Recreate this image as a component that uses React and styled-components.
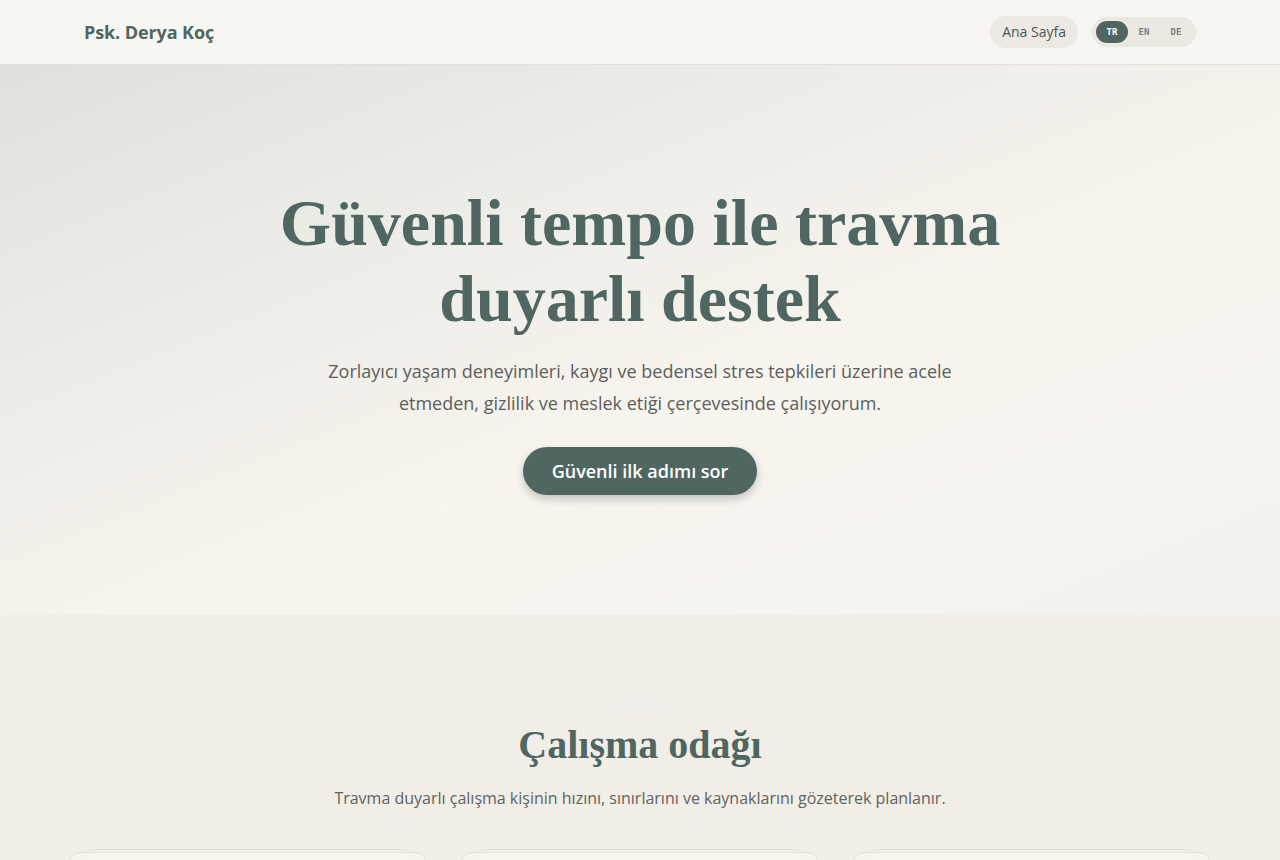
import React from "react";
import styled, { createGlobalStyle } from "styled-components";

const Global = createGlobalStyle`
  * { box-sizing: border-box; }
  html, body { margin: 0; padding: 0; }
  body {
    font-family: "Open Sans", "Noto Sans", sans-serif;
    background: #f1ede7;
    color: #4f6661;
  }
`;

const Header = styled.header`
  height: 65px;
  background: #f7f6f2;
  border-bottom: 1px solid #e2e0d9;
  display: flex;
  align-items: center;
  justify-content: space-between;
  padding: 0 84px 1px;
`;

const Logo = styled.div`
  font-size: 18px;
  font-weight: 700;
  color: #4f6661;
  letter-spacing: -0.1px;
`;

const Nav = styled.nav`
  display: flex;
  align-items: center;
  gap: 14px;
`;

const NavLink = styled.a`
  display: inline-flex;
  align-items: center;
  height: 32px;
  padding: 0 12px;
  border-radius: 16px;
  background: #ece9e3;
  color: #4a5856;
  font-size: 14px;
  text-decoration: none;
`;

const LangToggle = styled.div`
  display: flex;
  align-items: center;
  height: 30px;
  padding: 0 4px;
  border-radius: 15px;
  background: #ebe8e1;
`;

const LangButton = styled.button`
  border: none;
  height: 22px;
  width: 32px;
  border-radius: 11px;
  font-family: "DejaVu Sans Mono", "Liberation Mono", monospace;
  font-size: 9px;
  font-weight: 700;
  cursor: pointer;
  background: ${(p) => (p.$active ? "#4f6661" : "transparent")};
  color: ${(p) => (p.$active ? "#ffffff" : "#7d817f")};
  padding: 0;
`;

const Hero = styled.section`
  height: 550px;
  display: flex;
  flex-direction: column;
  align-items: center;
  justify-content: center;
  text-align: center;
  background: linear-gradient(158deg, #dfe1dc 0%, #ecece6 28%, #f8f4ee 58%, #f6f4ef 78%, #f2f3ee 100%);
`;

const Title = styled.h1`
  margin: 0;
  font-family: "Liberation Serif", "DejaVu Serif", serif;
  font-weight: 700;
  font-size: 66px;
  line-height: 76px;
  color: #4f6661;
  max-width: 760px;
`;

const Lead = styled.p`
  margin: 18px 0 0;
  max-width: 640px;
  font-size: 18px;
  line-height: 32px;
  color: #5b605f;
`;

const CTA = styled.a`
  margin-top: 28px;
  display: inline-flex;
  align-items: center;
  justify-content: center;
  height: 48px;
  padding: 0 29px;
  border-radius: 24px;
  background: #4f6661;
  color: #ffffff;
  font-size: 18px;
  font-weight: 600;
  text-decoration: none;
  box-shadow: 0 4px 8px rgba(60, 70, 68, 0.28);
`;

const Focus = styled.section`
  background: #f1ede7;
  padding: 82px 66px 0;
  display: flex;
  flex-direction: column;
  align-items: center;
  text-align: center;
`;

const Eyebrow = styled.span`
  display: inline-block;
  height: 16px;
  width: 62px;
  border-radius: 8px;
  background: #eeede8;
`;

const SectionTitle = styled.h2`
  margin: 6px 0 0;
  font-family: "Liberation Serif", "DejaVu Serif", serif;
  font-weight: 700;
  font-size: 40px;
  line-height: 52px;
  color: #4f6661;
`;

const SectionText = styled.p`
  margin: 13px 0 0;
  font-size: 16px;
  line-height: 28px;
  color: #5f6462;
`;

const Cards = styled.div`
  margin-top: 40px;
  width: 100%;
  display: grid;
  grid-template-columns: repeat(3, 1fr);
  gap: 28px;
`;

const Card = styled.div`
  position: relative;
  height: 160px;
  border-radius: 16px;
  background: #f8f4ee;
  border: 1px solid #e6e1d8;
  &::before {
    content: "";
    position: absolute;
    left: 14px;
    right: 14px;
    top: -4px;
    height: 12px;
    border-radius: 12px 12px 0 0;
    border-top: 1px solid #e4e0d8;
  }
`;

export default function App() {
  return (
    <>
      <Global />
      <Header>
        <Logo>Psk. Derya Koç</Logo>
        <Nav>
          <NavLink href="#">Ana Sayfa</NavLink>
          <LangToggle>
            <LangButton $active>TR</LangButton>
            <LangButton>EN</LangButton>
            <LangButton>DE</LangButton>
          </LangToggle>
        </Nav>
      </Header>
      <Hero>
        <Title>Güvenli tempo ile travma duyarlı destek</Title>
        <Lead>
          Zorlayıcı yaşam deneyimleri, kaygı ve bedensel stres tepkileri üzerine acele
          etmeden, gizlilik ve meslek etiği çerçevesinde çalışıyorum.
        </Lead>
        <CTA href="#">Güvenli ilk adımı sor</CTA>
      </Hero>
      <Focus>
        <Eyebrow />
        <SectionTitle>Çalışma odağı</SectionTitle>
        <SectionText>
          Travma duyarlı çalışma kişinin hızını, sınırlarını ve kaynaklarını gözeterek planlanır.
        </SectionText>
        <Cards>
          <Card />
          <Card />
          <Card />
        </Cards>
      </Focus>
    </>
  );
}
